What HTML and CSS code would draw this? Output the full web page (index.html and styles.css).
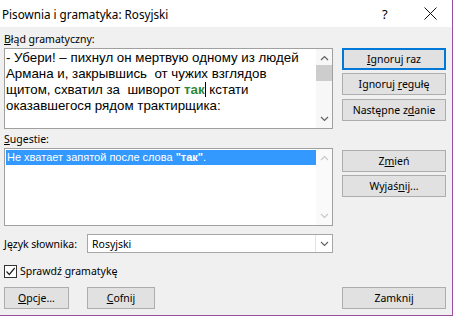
FILE: index.html
```html
<!DOCTYPE html>
<html lang="pl">
<head>
  <meta charset="UTF-8">
  <title>Pisownia i gramatyka: Rosyjski</title>
  <link rel="stylesheet" href="styles.css">
</head>
<body>
  <div class="window">
    <header class="titlebar">
      <span class="title">Pisownia i gramatyka: Rosyjski</span>
      <span class="help">?</span>
      <span class="close">
        <svg width="13" height="13" viewBox="0 0 13 13"><path d="M0.5 0.5 L12.5 12.5 M12.5 0.5 L0.5 12.5" stroke="#111" stroke-width="1" fill="none"/></svg>
      </span>
    </header>

    <main class="content">
      <div class="columns">
        <div class="left">
          <div class="caption"><u>B</u>łąd gramatyczny:</div>
          <div class="editbox">
            <div class="edit-text">- Убери! – пихнул он мертвую одному из людей Армана и, закрывшись&nbsp; от чужих взглядов щитом, схватил за&nbsp; шиворот <span class="error">так</span> кстати оказавшегося рядом трактирщика:</div>
            <div class="scrollbar">
              <svg class="arrow" width="9" height="6" viewBox="0 0 9 6"><path d="M1 5 L4.5 1.5 L8 5" stroke="#606060" stroke-width="1.2" fill="none"/></svg>
              <div class="track"><div class="thumb"></div></div>
              <svg class="arrow" width="9" height="6" viewBox="0 0 9 6"><path d="M1 1 L4.5 4.5 L8 1" stroke="#606060" stroke-width="1.2" fill="none"/></svg>
            </div>
          </div>

          <div class="caption caption-sugg"><u>S</u>ugestie:</div>
          <div class="listbox">
            <div class="list-items">
              <div class="item selected">Не хватает запятой после слова <b>"так"</b>.</div>
            </div>
            <div class="scrollbar disabled">
              <svg class="arrow" width="9" height="6" viewBox="0 0 9 6"><path d="M1 5 L4.5 1.5 L8 5" stroke="#c8c8c8" stroke-width="1.2" fill="none"/></svg>
              <div class="track"></div>
              <svg class="arrow" width="9" height="6" viewBox="0 0 9 6"><path d="M1 1 L4.5 4.5 L8 1" stroke="#c8c8c8" stroke-width="1.2" fill="none"/></svg>
            </div>
          </div>

          <div class="lang-row">
            <span class="lang-label"><u>J</u>ęzyk słownika:</span>
            <div class="combo">
              <span class="combo-value">Rosyjski</span>
              <span class="combo-btn">
                <svg width="9" height="6" viewBox="0 0 9 6"><path d="M1 1 L4.5 4.5 L8 1" stroke="#606060" stroke-width="1.1" fill="none"/></svg>
              </span>
            </div>
          </div>

          <label class="check">
            <span class="box">
              <svg width="11" height="11" viewBox="0 0 11 11"><path d="M1.5 5.5 L4.3 8.5 L9.7 2" stroke="#222" stroke-width="1.2" fill="none"/></svg>
            </span>
            <span>Sprawdź <u>g</u>ramatykę</span>
          </label>
        </div>

        <div class="right">
          <button class="btn default"><u>I</u>gnoruj raz</button>
          <button class="btn">Ignoruj <u>r</u>egułę</button>
          <button class="btn btn-next">Następne z<u>d</u>anie</button>
          <button class="btn btn-change">Z<u>m</u>ień</button>
          <button class="btn">Wyjaś<u>n</u>ij...</button>
        </div>
      </div>

      <div class="footer">
        <div class="footer-left">
          <button class="btn btn-opcje"><u>O</u>pcje...</button>
          <button class="btn btn-cofnij"><u>C</u>ofnij</button>
        </div>
        <button class="btn">Zamknij</button>
      </div>
    </main>
  </div>
</body>
</html>
```

FILE: styles.css
```css
body {
  margin: 0;
  background: #ffffff;
  font-family: 'Noto Sans', sans-serif;
  font-size: 10.5px;
  color: #000;
}

.window {
  width: 452px;
  height: 315px;
  background: #f0f0f0;
  border-right: 1px solid #9b4f9e;
  border-bottom: 1px solid #9b4f9e;
}

.titlebar {
  height: 27px;
  background: #ffffff;
  display: flex;
  align-items: center;
  padding-left: 2px;
}

.title {
  flex: 1;
  font-size: 11.7px;
}

.help {
  width: 20px;
  margin-right: 22px;
  font-size: 13px;
}

.close {
  width: 28px;
  display: flex;
  align-items: center;
}

.content {
  padding: 4px 6px 0 4px;
}

.columns {
  display: flex;
  gap: 9px;
}

.left {
  width: 329px;
  display: flex;
  flex-direction: column;
}

.caption {
  height: 17px;
  line-height: 17px;
}

.caption-sugg {
  margin-top: 2px;
}

u {
  text-decoration-thickness: 1px;
  text-underline-offset: 1px;
}

.editbox,
.listbox {
  display: flex;
  background: #fff;
  border: 1px solid #a0a0a0;
}

.editbox {
  height: 79px;
}

.listbox {
  height: 76px;
}

.edit-text {
  flex: 1;
  padding: 1px 4px 0 1px;
  font-family: 'Liberation Sans', Arial, sans-serif;
  font-size: 13.3px;
  line-height: 16px;
}

/* the word flagged by the checker, caret sits right after it */
.error {
  color: #2f8a3a;
  font-weight: bold;
  border-right: 1px solid #000;
}

.scrollbar {
  width: 16px;
  display: flex;
  flex-direction: column;
  align-items: center;
  background: #f7f7f7;
  padding: 6px 0;
}

.scrollbar.disabled {
  background: #fafafa;
}

.track {
  flex: 1;
  width: 100%;
  padding-top: 4px;
}

.thumb {
  height: 16px;
  background: #cdcdcd;
}

.list-items {
  flex: 1;
  padding: 1px 0 0 1px;
}

.item {
  height: 15px;
  line-height: 15px;
  padding-left: 1px;
  font-family: 'Liberation Sans', Arial, sans-serif;
  font-size: 11px;
}

.item.selected {
  background: #3399ff;
  color: #fff;
}

.lang-row {
  display: flex;
  align-items: center;
  margin-top: 8px;
}

.lang-label {
  width: 83px;
  flex-shrink: 0;
  white-space: nowrap;
}

.combo {
  flex: 1;
  height: 17px;
  display: flex;
  align-items: center;
  background: #fff;
  border: 1px solid #a6a6a6;
}

.combo-value {
  flex: 1;
  padding-left: 4px;
}

.combo-btn {
  width: 16px;
  height: 100%;
  display: flex;
  align-items: center;
  justify-content: center;
  border-left: 1px solid #e3e3e3;
}

.check {
  display: flex;
  align-items: center;
  gap: 3px;
  margin-top: 11px;
  height: 14px;
  white-space: nowrap;
}

.box {
  width: 11px;
  height: 11px;
  border: 1px solid #333;
  background: #fff;
  display: flex;
}

.right {
  width: 104px;
  display: flex;
  flex-direction: column;
  gap: 3px;
  padding-top: 17px;
}

.btn {
  height: 22px;
  padding: 0;
  background: #e1e1e1;
  border: 1px solid #adadad;
  font-family: 'Noto Sans', sans-serif;
  font-size: 10.5px;
  color: #000;
  white-space: nowrap;
}

.right .btn,
.footer > .btn {
  width: 104px;
}

.btn.default {
  border: 2px solid #0078d7;
}

.btn-next {
  margin-top: 1px;
}

.btn-change {
  margin-top: 26px;
}

.footer {
  display: flex;
  justify-content: space-between;
  margin-top: 9px;
}

.footer-left {
  display: flex;
  gap: 18px;
}

.btn-opcje {
  width: 65px;
}

.btn-cofnij {
  width: 68px;
}
```
